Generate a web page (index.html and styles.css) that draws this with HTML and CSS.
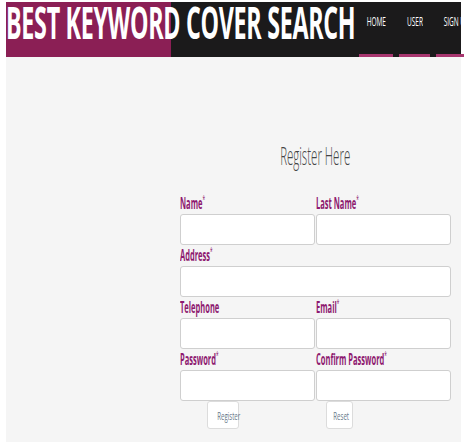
FILE: index.html
```html
<!DOCTYPE html>
<html lang="en">
<head>
  <meta charset="UTF-8">
  <meta name="viewport" content="width=device-width, initial-scale=1.0">
  <title>Best Keyword Cover Search - Register</title>
  <link rel="stylesheet" href="styles.css">
</head>
<body>

  <div class="page">
    <header class="top">
      <div class="brand"><span class="brand-text">BEST KEYWORD COVER SEARCH</span></div>
      <nav class="menu">
        <a href="#" class="menu-home"><span>HOME</span></a>
        <a href="#" class="menu-user"><span>USER</span></a>
        <a href="#" class="menu-sign"><span>SIGN UP</span></a>
      </nav>
    </header>

    <div class="content">
      <form class="register">
        <h2 class="register-title"><span>Register Here</span></h2>

        <div class="fields">
          <div class="field">
            <label><span>Name<sup>*</sup></span></label>
            <input type="text">
          </div>
          <div class="field">
            <label><span>Last Name<sup>*</sup></span></label>
            <input type="text">
          </div>
          <div class="field wide">
            <label><span>Address<sup>*</sup></span></label>
            <input type="text">
          </div>
          <div class="field">
            <label><span>Telephone</span></label>
            <input type="text">
          </div>
          <div class="field">
            <label><span>Email<sup>*</sup></span></label>
            <input type="text">
          </div>
          <div class="field">
            <label><span>Password<sup>*</sup></span></label>
            <input type="password">
          </div>
          <div class="field">
            <label><span>Confirm Password<sup>*</sup></span></label>
            <input type="password">
          </div>
        </div>

        <div class="buttons">
          <button type="submit" class="btn-register"><span>Register</span></button>
          <button type="reset" class="btn-reset"><span>Reset</span></button>
        </div>
      </form>
    </div>
  </div>

</body>
</html>
```

FILE: styles.css
```css
body {
  margin: 0;
  background-color: #fff;
  font-family: "Open Sans", Arial, sans-serif;
}
.page {
  margin: 2px 3px 0 6px;
}
.top {
  display: flex;
  height: 55px;
  background-color: #1b1a1b;
}
.brand {
  width: 353px;
  flex: none;
  background: linear-gradient(to right, #8b1f55 165px, transparent 165px);
}
/* tall condensed logo: small font stretched upward */
.brand-text {
  display: inline-block;
  color: #fff;
  font-size: 23.3px;
  font-weight: 700;
  line-height: 20px;
  white-space: nowrap;
  letter-spacing: -0.3px;
  transform: scaleY(1.93);
  transform-origin: left top;
}
.menu {
  display: flex;
  gap: 6px;
}
.menu a {
  display: flex;
  justify-content: center;
  height: 52px;
  border-bottom: 3px solid #a8366f;
  color: #fff;
  text-decoration: none;
  font-size: 13px;
  line-height: 39px;
  white-space: nowrap;
}
.menu a span {
  display: inline-block;
  transform: scaleX(0.5);
}
.menu-home { width: 34px; }
.menu-user { width: 31px; }
.menu-sign { width: 40px; }

.content {
  height: 384px;
  background-color: #f5f5f5;
  padding-top: 1px;
}
.register {
  width: 271px;
  margin-left: 174px;
}
.register-title {
  margin: 79px 0 20px;
  text-align: center;
  font-weight: 300;
  font-size: 25px;
  line-height: 36px;
  color: #444;
}
.register-title span {
  display: inline-block;
  transform: scaleX(0.46);
}
.fields {
  display: grid;
  grid-template-columns: 135px 135px;
  column-gap: 1px;
}
.field.wide {
  grid-column: span 2;
}
.field label {
  display: block;
  height: 21px;
  font-size: 16px;
  font-weight: 700;
  line-height: 21px;
  color: #8e1a70;
  white-space: nowrap;
}
.field label span {
  display: inline-block;
  transform: scaleX(0.47);
  transform-origin: left center;
}
.field sup {
  font-size: 10px;
  font-weight: 400;
  line-height: 0;
  vertical-align: 6px;
}
.field input {
  display: block;
  box-sizing: border-box;
  width: 100%;
  height: 31px;
  margin: 0;
  border: 1px solid #cfcfcf;
  border-radius: 3px;
  background-color: #fff;
}
.buttons {
  display: flex;
}
.buttons button {
  height: 28px;
  padding: 0;
  border: 1px solid #dcdcdc;
  border-radius: 3px;
  background-color: #fff;
  color: #667788;
  font-family: "Open Sans", Arial, sans-serif;
  font-size: 11px;
  cursor: pointer;
}
.buttons button span {
  display: inline-block;
  transform: scaleX(0.55);
}
.btn-register {
  width: 32px;
  margin-left: 27px;
}
.btn-reset {
  width: 27px;
  margin-left: 87px;
}
```
